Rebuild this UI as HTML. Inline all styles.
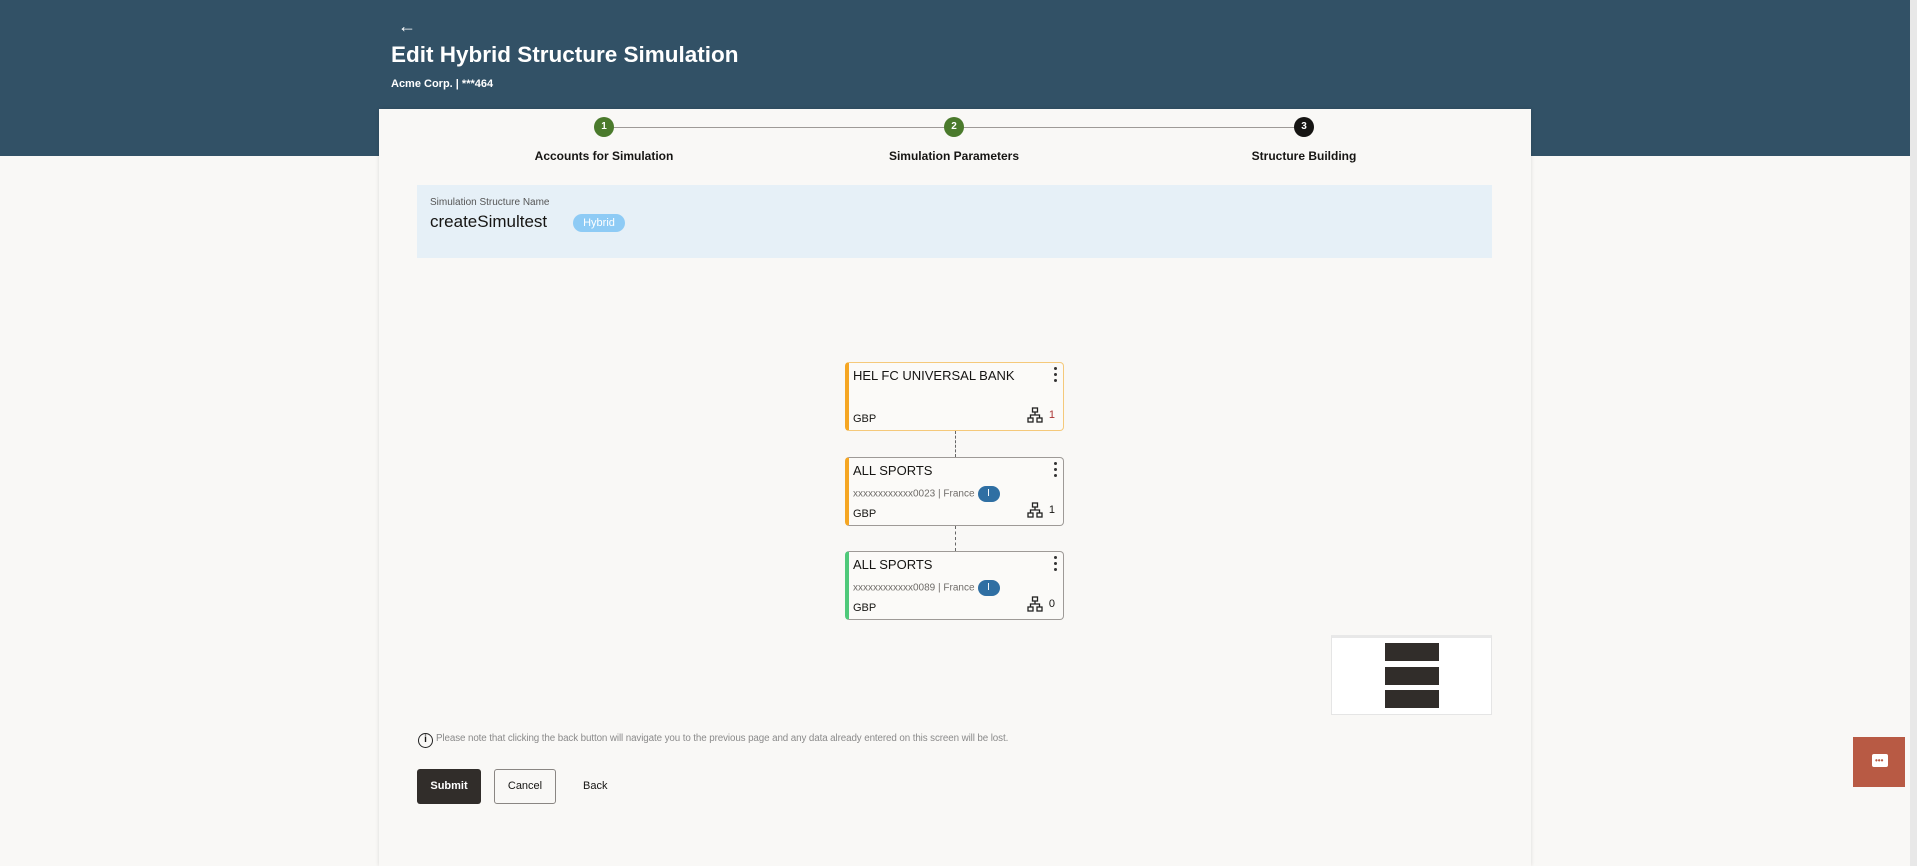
<!DOCTYPE html>
<html><head><meta charset="utf-8"><style>
*{box-sizing:border-box;margin:0;padding:0}
body{width:1917px;height:866px;overflow:hidden;background:#f9f8f6;font-family:"Liberation Sans",sans-serif;position:relative;color:#161513}
.hdr{position:absolute;left:0;top:0;width:1917px;height:156px;background:#325166}
.main{position:absolute;left:379px;top:109px;width:1152px;height:757px;background:#f9f8f6;box-shadow:0 0 4px rgba(0,0,0,.12)}
.abs{position:absolute}
.step{position:absolute;width:20px;height:20px;border-radius:50%;color:#fff;font-size:10px;font-weight:bold;text-align:center;line-height:20px}
.lbl{position:absolute;font-size:12px;font-weight:bold;transform:translateX(-50%);white-space:nowrap}
.card{position:absolute;left:845px;width:219px;height:69px;background:#fbfaf8;border:1px solid #9e9a97;border-left:4px solid #f5a623;border-radius:4px}
.card .t{position:absolute;left:4px;top:5px;font-size:13px}
.card .s{position:absolute;left:4px;top:28px;font-size:10px;color:#6f6c69}
.card .g{position:absolute;left:4px;top:50px;font-size:11px}
.card .dots{position:absolute;right:6px;top:4px;width:3px}
.card .dots i{display:block;width:3px;height:3px;border-radius:50%;background:#333;margin-bottom:3px}
.card .n{position:absolute;right:8px;top:46px;font-size:11px}
.card svg{position:absolute;right:20px;top:44px}
.badge{display:inline-block;width:22px;height:16px;border-radius:8px;background:#2f6fa3;color:#fff;text-align:center;font-size:10px;line-height:16px;vertical-align:middle;margin-left:3px}
.vl{position:absolute;left:955px;width:0;border-left:1px dashed #666}
</style></head><body>
<div class="hdr"></div>
<div class="abs" style="left:398px;top:16px;color:#fff;font-size:18px">&#8592;</div>
<div class="abs" style="left:391px;top:42px;color:#fff;font-size:22.5px;font-weight:bold">Edit Hybrid Structure Simulation</div>
<div class="abs" style="left:391px;top:78px;color:#fff;font-size:11px;font-weight:bold">Acme Corp. | ***464</div>
<div class="main"></div>
<div class="abs" style="left:604px;top:127px;width:700px;border-top:1px solid #9e9a97"></div>
<div class="step" style="left:594px;top:117px;background:#4a7a2c">1</div>
<div class="step" style="left:944px;top:117px;background:#4a7a2c">2</div>
<div class="step" style="left:1294px;top:117px;background:#161513">3</div>
<div class="lbl" style="left:604px;top:149px">Accounts for Simulation</div>
<div class="lbl" style="left:954px;top:149px">Simulation Parameters</div>
<div class="lbl" style="left:1304px;top:149px">Structure Building</div>
<div class="abs" style="left:417px;top:185px;width:1075px;height:73px;background:#e6f0f7"></div>
<div class="abs" style="left:430px;top:197px;font-size:10px;color:#555">Simulation Structure Name</div>
<div class="abs" style="left:430px;top:212px;font-size:17px">createSimultest</div>
<div class="abs" style="left:573px;top:214px;width:52px;height:18px;border-radius:9px;background:#8ecbf5;color:#fff;font-size:11px;text-align:center;line-height:18px">Hybrid</div>

<div class="card" style="top:362px;border-color:#f5c97a;border-left-color:#f5a623"><div class="t">HEL FC UNIVERSAL BANK</div><div class="g">GBP</div><div class="dots"><i></i><i></i><i></i></div>
<svg width="16" height="16" viewBox="0 0 16 16" fill="none" stroke="#222" stroke-width="1.3"><rect x="5.5" y="1" width="5" height="4"/><rect x="1" y="11" width="5" height="4"/><rect x="10" y="11" width="5" height="4"/><path d="M8 5v3M3.5 11V8h9v3"/></svg><div class="n" style="color:#a33">1</div></div>
<div class="vl" style="top:431px;height:26px"></div>
<div class="card" style="top:457px"><div class="t">ALL SPORTS</div><div class="s">xxxxxxxxxxxx0023 | France<span class="badge">I</span></div><div class="g">GBP</div><div class="dots"><i></i><i></i><i></i></div>
<svg width="16" height="16" viewBox="0 0 16 16" fill="none" stroke="#222" stroke-width="1.3"><rect x="5.5" y="1" width="5" height="4"/><rect x="1" y="11" width="5" height="4"/><rect x="10" y="11" width="5" height="4"/><path d="M8 5v3M3.5 11V8h9v3"/></svg><div class="n">1</div></div>
<div class="vl" style="top:526px;height:25px"></div>
<div class="card" style="top:551px;border-left-color:#4fc97a"><div class="t">ALL SPORTS</div><div class="s">xxxxxxxxxxxx0089 | France<span class="badge">I</span></div><div class="g">GBP</div><div class="dots"><i></i><i></i><i></i></div>
<svg width="16" height="16" viewBox="0 0 16 16" fill="none" stroke="#222" stroke-width="1.3"><rect x="5.5" y="1" width="5" height="4"/><rect x="1" y="11" width="5" height="4"/><rect x="10" y="11" width="5" height="4"/><path d="M8 5v3M3.5 11V8h9v3"/></svg><div class="n">0</div></div>

<div class="abs" style="left:1331px;top:635px;width:161px;height:80px;background:#fff;border:1px solid #e5e5e5;border-top:3px solid #e8e8e8"></div>
<div class="abs" style="left:1385px;top:643px;width:54px;height:18px;background:#312d2a"></div>
<div class="abs" style="left:1385px;top:667px;width:54px;height:18px;background:#312d2a"></div>
<div class="abs" style="left:1385px;top:690px;width:54px;height:18px;background:#312d2a"></div>

<div class="abs" style="left:418px;top:733px;width:15px;height:15px;border:1.5px solid #222;border-radius:50%;font-size:10px;text-align:center;line-height:12px;font-weight:bold">i</div>
<div class="abs" style="left:436px;top:733px;font-size:9.8px;color:#8a8a8a;letter-spacing:-0.1px">Please note that clicking the back button will navigate you to the previous page and any data already entered on this screen will be lost.</div>
<div class="abs" style="left:417px;top:769px;width:64px;height:35px;background:#312d2a;border-radius:3px;color:#fff;font-size:11px;font-weight:bold;text-align:center;line-height:35px">Submit</div>
<div class="abs" style="left:494px;top:769px;width:62px;height:35px;border:1px solid #8a8683;border-radius:3px;font-size:11px;text-align:center;line-height:33px">Cancel</div>
<div class="abs" style="left:583px;top:780px;font-size:11px">Back</div>
<div class="abs" style="left:1853px;top:737px;width:52px;height:50px;background:#b85a44"></div>
<div class="abs" style="left:1872px;top:754px;width:16px;height:13px;background:#fff;border-radius:2px"></div>
<div class="abs" style="left:1875px;top:759px;font-size:8px;color:#b85a44;font-weight:bold;line-height:3px">•••</div>
<div class="abs" style="left:1910px;top:0;width:7px;height:866px;background:#e8e8e8"></div>
</body></html>
